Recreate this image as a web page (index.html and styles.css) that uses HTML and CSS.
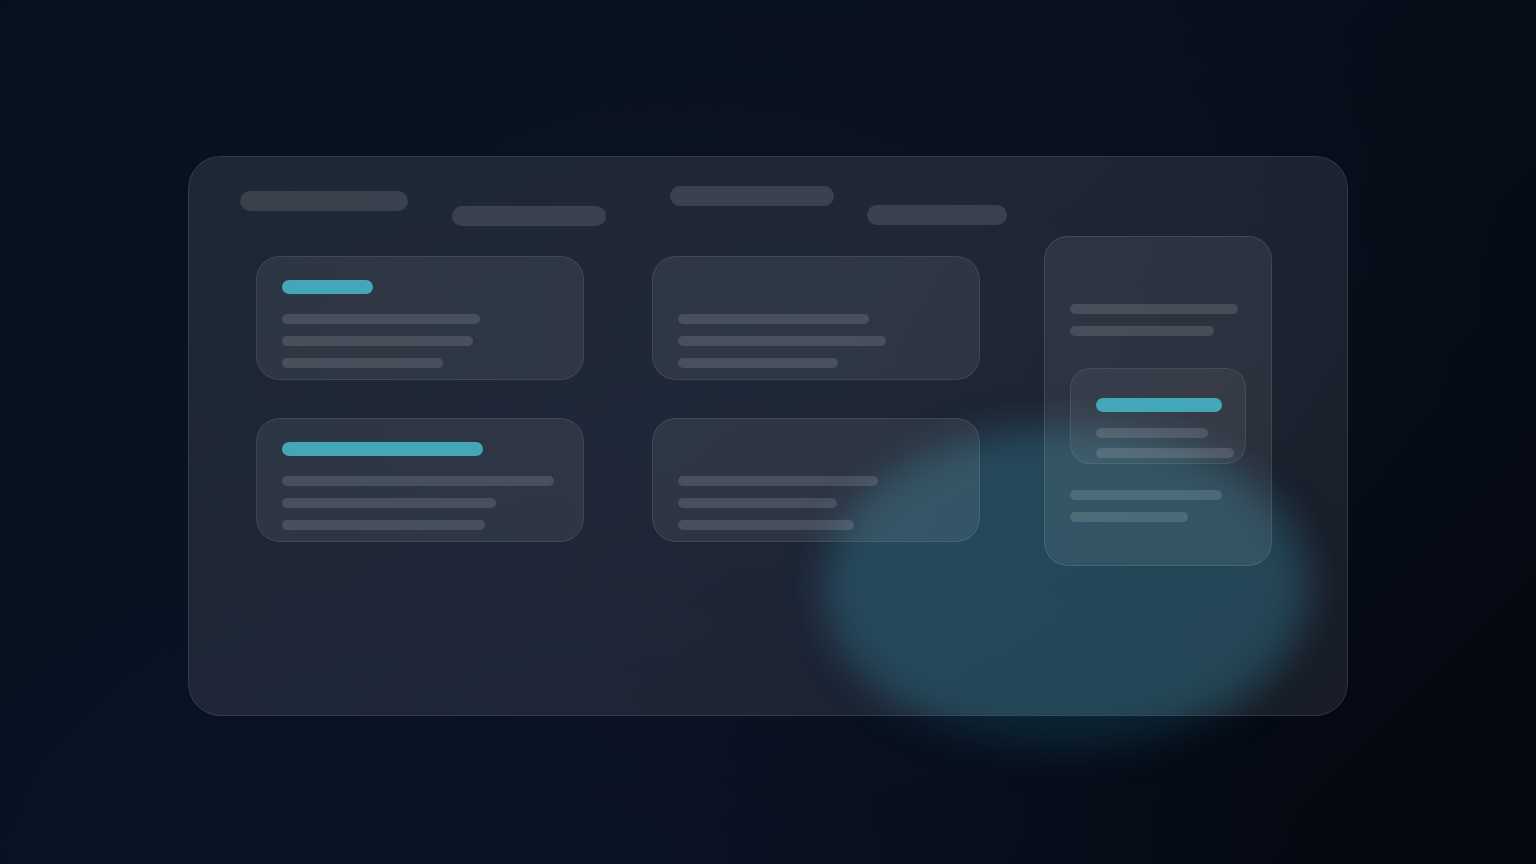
FILE: index.html
```html
<!DOCTYPE html>
<html lang="en">
<head>
<meta charset="utf-8">
<title>Dashboard skeleton</title>
<link rel="stylesheet" href="styles.css">
</head>
<body>
<div class="glow"></div>
<div class="panel">
  <div class="glow-inner"></div>
  <div class="header">
    <div class="pill pill-1"></div>
    <div class="pill pill-2"></div>
    <div class="pill pill-3"></div>
    <div class="pill pill-4"></div>
  </div>
  <div class="body">
    <div class="grid">
      <div class="card">
        <div class="accent" style="width:91px"></div>
        <div class="line" style="width:198px"></div>
        <div class="line" style="width:191px"></div>
        <div class="line" style="width:161px"></div>
      </div>
      <div class="card">
        <div class="accent ghost" style="width:91px"></div>
        <div class="line" style="width:191px"></div>
        <div class="line" style="width:208px"></div>
        <div class="line" style="width:160px"></div>
      </div>
      <div class="card">
        <div class="accent" style="width:201px"></div>
        <div class="line" style="width:272px"></div>
        <div class="line" style="width:214px"></div>
        <div class="line" style="width:203px"></div>
      </div>
      <div class="card">
        <div class="accent ghost" style="width:91px"></div>
        <div class="line" style="width:200px"></div>
        <div class="line" style="width:159px"></div>
        <div class="line" style="width:176px"></div>
      </div>
    </div>
    <div class="side">
      <div class="line" style="width:168px"></div>
      <div class="line" style="width:144px"></div>
      <div class="inner">
        <div class="accent" style="width:126px"></div>
        <div class="line tight" style="width:112px"></div>
        <div class="line tight" style="width:138px"></div>
      </div>
      <div class="line after" style="width:152px"></div>
      <div class="line" style="width:118px"></div>
    </div>
  </div>
</div>
</body>
</html>
```
FILE: styles.css
```css
html, body {
  margin: 0;
  padding: 0;
}
body {
  position: relative;
  width: 1536px;
  height: 864px;
  overflow: hidden;
  font-family: "Inter", "Liberation Sans", sans-serif;
  background:
    radial-gradient(ellipse 55% 60% at 30% 100%, rgba(11, 20, 40, 0.9) 0%, rgba(11, 20, 40, 0) 100%),
    radial-gradient(ellipse 50% 55% at 50% 40%, rgba(14, 22, 40, 0.6) 0%, rgba(14, 22, 40, 0) 100%),
    linear-gradient(135deg, #07111d 0%, #08101e 45%, #03070f 100%);
}
.glow {
  position: absolute;
  left: 825px;
  top: 428px;
  width: 482px;
  height: 318px;
  border-radius: 50%;
  background: rgba(22, 92, 115, 0.3);
  filter: blur(20px);
  z-index: 0;
}
.panel {
  position: relative;
  z-index: 1;
  overflow: hidden;
  box-sizing: border-box;
  width: 1160px;
  height: 560px;
  margin: 156px auto 0;
  padding: 29px 0 0 51px;
  border: 1px solid rgba(255, 255, 255, 0.1);
  border-radius: 33px;
  background: linear-gradient(160deg, rgba(225, 232, 255, 0.1) 0%, rgba(228, 232, 250, 0.095) 60%, rgba(232, 234, 245, 0.085) 100%);
}
.glow-inner {
  position: absolute;
  left: 636px;
  top: 271px;
  width: 482px;
  height: 318px;
  border-radius: 50%;
  background: rgba(62, 140, 160, 0.2);
  filter: blur(18px);
  z-index: 0;
}
.header {
  position: relative;
  z-index: 1;
  display: flex;
  align-items: flex-start;
  height: 40px;
}
.pill {
  height: 20px;
  border-radius: 10px;
  background: rgba(255, 255, 255, 0.12);
}
.pill-1 { width: 168px; margin-top: 5px; }
.pill-2 { width: 154px; margin-top: 20px; margin-left: 44px; }
.pill-3 { width: 164px; margin-left: 64px; }
.pill-4 { width: 140px; margin-top: 19px; margin-left: 33px; }

.body {
  position: relative;
  z-index: 1;
  display: flex;
  align-items: flex-start;
  margin-top: 10px;
  padding-left: 16px;
}
.grid {
  display: grid;
  grid-template-columns: 328px 328px;
  column-gap: 68px;
  row-gap: 38px;
  margin-top: 20px;
}
.card {
  box-sizing: border-box;
  height: 124px;
  padding: 23px 25px 0;
  border: 1px solid rgba(255, 255, 255, 0.09);
  border-radius: 24px;
  background: rgba(255, 255, 255, 0.07);
  display: flex;
  flex-direction: column;
  align-items: flex-start;
}
.accent {
  height: 14px;
  border-radius: 7px;
  background: #44a7b9;
  margin-bottom: 20px;
  flex: none;
}
.accent.ghost {
  background: transparent;
}
.line {
  height: 10px;
  border-radius: 5px;
  background: rgba(255, 255, 255, 0.13);
  margin-bottom: 12px;
  flex: none;
}
.side {
  box-sizing: border-box;
  width: 228px;
  height: 330px;
  margin-left: 64px;
  padding: 67px 25px 0;
  border: 1px solid rgba(255, 255, 255, 0.1);
  border-radius: 24px;
  background: rgba(255, 255, 255, 0.07);
  display: flex;
  flex-direction: column;
  align-items: flex-start;
}
.inner {
  box-sizing: border-box;
  width: 176px;
  height: 96px;
  margin-top: 20px;
  padding: 29px 0 0 25px;
  border: 1px solid rgba(255, 255, 255, 0.08);
  border-radius: 20px;
  background: rgba(255, 255, 255, 0.05);
  display: flex;
  flex-direction: column;
  align-items: flex-start;
}
.inner .accent {
  margin-bottom: 16px;
}
.line.tight {
  margin-bottom: 10px;
}
.line.after {
  margin-top: 26px;
}
```
